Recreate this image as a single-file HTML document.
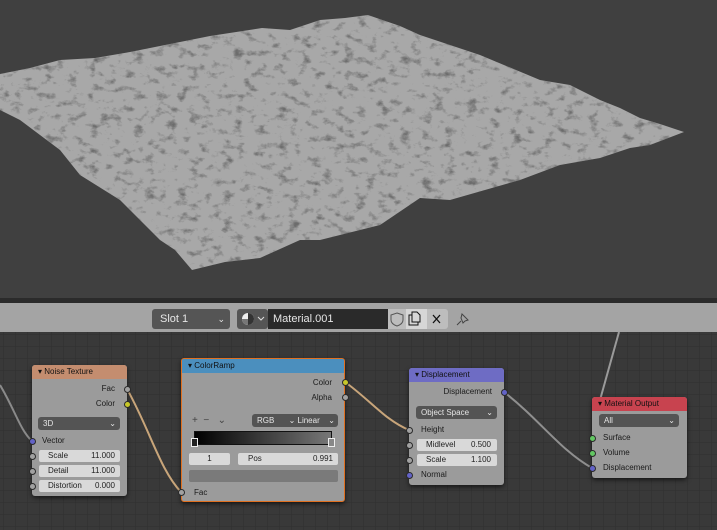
<!DOCTYPE html>
<html><head><meta charset="utf-8"><style>
*{margin:0;padding:0;box-sizing:border-box}
body{width:717px;height:530px;overflow:hidden;background:#404040;font-family:"Liberation Sans",sans-serif;font-size:8px;color:#1a1a1a;position:relative}
.abs{position:absolute}
.node{position:absolute;background:#9b9b9b;border-radius:3px;box-shadow:0 2px 5px rgba(0,0,0,.6)}
.hd{height:14px;border-radius:3px 3px 0 0;padding-left:6px;line-height:14px;font-size:8px;color:#111}
.row{position:absolute;font-size:8px;line-height:10px}
.fld{position:absolute;background:#d9d9d9;border-radius:2px;height:12px;font-size:8px;line-height:12px;color:#222}
.dd{position:absolute;background:#545454;border-radius:3px;height:13px;color:#e6e6e6;font-size:8px;line-height:13px;padding-left:5px}
.sk{position:absolute;width:7px;height:7px;border-radius:50%;border:1px solid #2a2a2a;margin:-3.5px 0 0 -3.5px}
</style></head><body>
<svg class="abs" style="left:0;top:0" width="717" height="300">
<rect width="717" height="300" fill="#404040"/>
<defs>
<filter id="n" x="0" y="0" width="100%" height="100%" color-interpolation-filters="sRGB"><feTurbulence type="fractalNoise" baseFrequency="0.09 0.14" numOctaves="5" seed="3" result="t"/><feColorMatrix in="t" type="matrix" values="0 0 0 0 0.35 0 0 0 0 0.35 0 0 0 0 0.35 3.2 0 0 0 -1.75"/></filter>
<clipPath id="c"><path d="M0,74 L30,68 L60,60 L95,58 L130,52 L170,44 L210,36 L262,28 L290,30 L320,20 L345,18 L368,15 L400,26 L420,35 L480,55 L540,80 L570,85 L600,100 L620,108 L640,118 L660,124 L684,132 L650,145 L630,148 L600,158 L560,165 L520,180 L450,200 L420,198 L380,225 L320,240 L300,240 L260,258 L225,262 L192,270 L175,250 L160,240 L120,200 L80,175 L60,150 L20,120 L10,115 L0,110 Z"/></clipPath>
</defs>
<g clip-path="url(#c)"><rect width="717" height="300" fill="#a8a8a8"/><rect width="717" height="300" fill="#000" filter="url(#n)" opacity="0.75"/></g>
</svg>
<div class="abs" style="left:0;top:298px;width:717px;height:5px;background:#2b2b2b"></div>
<div class="abs" style="left:0;top:303px;width:717px;height:29px;background:#a4a4a4"></div>
<svg class="abs" style="left:0;top:332px" width="717" height="198">
<defs><pattern id="g" width="12" height="12" patternUnits="userSpaceOnUse" x="3" y="2"><path d="M0 0H12M0 0V12" stroke="#2f2f2f" stroke-width="1"/></pattern></defs>
<rect width="717" height="198" fill="#393939"/><rect width="717" height="198" fill="url(#g)"/>
</svg>
<div class="dd" style="left:152px;top:309px;width:78px;height:20px;line-height:20px;font-size:11px;background:#555;padding-left:8px">Slot 1<span style="position:absolute;right:5px;font-size:9px">⌄</span></div>
<div class="dd" style="left:237px;top:309px;width:31px;height:20px;background:#555"></div>
<svg class="abs" style="left:240px;top:311px" width="28" height="16"><circle cx="8" cy="8" r="6" fill="#eee"/><path d="M8 2a6 6 0 0 1 0 12z M8 8h6a6 6 0 0 1-6 6z" fill="#333"/><path d="M8 8H2a6 6 0 0 0 6 6z" fill="#777"/><path d="M18 6l3 3 3-3" stroke="#ddd" fill="none"/></svg>
<div class="abs" style="left:268px;top:309px;width:120px;height:20px;background:#2a2a2a;color:#e6e6e6;font-size:11px;line-height:20px;padding-left:5px">Material.001</div>
<div class="abs" style="left:388px;top:309px;width:60px;height:20px;background:#bdbdbd;border-radius:0 3px 3px 0"></div>
<div class="abs" style="left:406px;top:309px;width:21px;height:20px;background:#d6d6d6"></div>
<svg class="abs" style="left:388px;top:309px" width="90" height="20"><path d="M9 4l6 2v5c0 3-3 5-6 6-3-1-6-3-6-6V6z" fill="none" stroke="#555"/><path d="M24 6h-3v10h9v-3 M24 3h5l3 3v7h-8z" fill="none" stroke="#111"/><path d="M45 6l7 8M52 6l-7 8" stroke="#111" stroke-width="1.3"/><path d="M74 5l6 6-3 1-2 2-2-5zM73 12l-4 4" stroke="#444" fill="none"/></svg>
<svg class="abs" style="left:0;top:0" width="717" height="530">
<g fill="none" stroke-width="2">
<path d="M0,385 C15,410 20,430 32,441" stroke="#8a8a8a"/>
<path d="M127,389 C150,430 160,470 181,492" stroke="#c8a57a"/>
<path d="M345,382 C370,400 385,420 409,430" stroke="#c8a57a"/>
<path d="M504,392 C540,420 560,450 592,468" stroke="#8f8f8f"/>
<path d="M619,332 L600,400" stroke="#9a9a9a"/>
</g></svg>
<div class="node" style="left:32px;top:365px;width:95px;height:131px">
<div class="hd" style="background:#c48d6f">▾ Noise Texture</div>
<div class="row" style="right:12px;top:19px">Fac</div>
<div class="row" style="right:12px;top:34px">Color</div>
<div class="dd" style="left:6px;top:52px;width:82px">3D<span style="position:absolute;right:4px">⌄</span></div>
<div class="row" style="left:10px;top:71px">Vector</div>
<div class="fld" style="left:7px;top:85px;width:81px"><span style="margin-left:9px">Scale</span><span style="position:absolute;right:5px">11.000</span></div>
<div class="fld" style="left:7px;top:100px;width:81px"><span style="margin-left:9px">Detail</span><span style="position:absolute;right:5px">11.000</span></div>
<div class="fld" style="left:7px;top:115px;width:81px"><span style="margin-left:9px">Distortion</span><span style="position:absolute;right:5px">0.000</span></div>
</div>
<div class="node" style="left:181px;top:358px;width:164px;height:144px;border:1px solid #e07020">
<div class="hd" style="background:#4b8fbe;border-radius:2px 2px 0 0">▾ ColorRamp</div>
<div class="row" style="right:12px;top:19px">Color</div>
<div class="row" style="right:12px;top:34px">Alpha</div>
<div class="row" style="left:10px;top:57px;color:#444;font-size:10px">+ &nbsp;− &nbsp; ⌄</div>
<div class="dd" style="left:70px;top:55px;width:86px">RGB <span style="margin-left:12px">⌄ Linear</span><span style="position:absolute;right:3px">⌄</span></div>
<div class="abs" style="left:12px;top:72px;width:138px;height:14px;background:linear-gradient(90deg,#000,#777);border:1px solid #111"></div>
<div class="abs" style="left:9px;top:79px;width:7px;height:9px;background:#222;border:1px solid #eee"></div>
<div class="abs" style="left:146px;top:79px;width:7px;height:9px;background:#888;border:1px solid #eee"></div>
<div class="fld" style="left:7px;top:94px;width:41px;text-align:center">1</div>
<div class="fld" style="left:56px;top:94px;width:100px"><span style="margin-left:10px">Pos</span><span style="position:absolute;right:5px">0.991</span></div>
<div class="abs" style="left:7px;top:111px;width:149px;height:12px;background:#7a7a7a;border-radius:2px"></div>
<div class="row" style="left:12px;top:129px">Fac</div>
</div>
<div class="node" style="left:409px;top:368px;width:95px;height:117px">
<div class="hd" style="background:#6e6cc4">▾ Displacement</div>
<div class="row" style="right:12px;top:19px">Displacement</div>
<div class="dd" style="left:7px;top:38px;width:81px">Object Space<span style="position:absolute;right:4px">⌄</span></div>
<div class="row" style="left:12px;top:57px">Height</div>
<div class="fld" style="left:8px;top:71px;width:80px"><span style="margin-left:9px">Midlevel</span><span style="position:absolute;right:6px">0.500</span></div>
<div class="fld" style="left:8px;top:86px;width:80px"><span style="margin-left:9px">Scale</span><span style="position:absolute;right:6px">1.100</span></div>
<div class="row" style="left:12px;top:102px">Normal</div>
</div>
<div class="node" style="left:592px;top:397px;width:95px;height:81px">
<div class="hd" style="background:#c8434f">▾ Material Output</div>
<div class="dd" style="left:7px;top:17px;width:80px">All<span style="position:absolute;right:4px">⌄</span></div>
<div class="row" style="left:11px;top:36px">Surface</div>
<div class="row" style="left:11px;top:51px">Volume</div>
<div class="row" style="left:11px;top:66px">Displacement</div>
</div>
<div class="sk" style="left:127px;top:389px;background:#a1a1a1"></div>
<div class="sk" style="left:127px;top:404px;background:#c7c729"></div>
<div class="sk" style="left:32px;top:441px;background:#6363c7"></div>
<div class="sk" style="left:32px;top:456px;background:#a1a1a1"></div>
<div class="sk" style="left:32px;top:471px;background:#a1a1a1"></div>
<div class="sk" style="left:32px;top:486px;background:#a1a1a1"></div>
<div class="sk" style="left:345px;top:382px;background:#c7c729"></div>
<div class="sk" style="left:345px;top:397px;background:#a1a1a1"></div>
<div class="sk" style="left:181px;top:492px;background:#a1a1a1"></div>
<div class="sk" style="left:504px;top:392px;background:#6363c7"></div>
<div class="sk" style="left:409px;top:430px;background:#a1a1a1"></div>
<div class="sk" style="left:409px;top:445px;background:#a1a1a1"></div>
<div class="sk" style="left:409px;top:460px;background:#a1a1a1"></div>
<div class="sk" style="left:409px;top:475px;background:#6363c7"></div>
<div class="sk" style="left:592px;top:438px;background:#63c763"></div>
<div class="sk" style="left:592px;top:453px;background:#63c763"></div>
<div class="sk" style="left:592px;top:468px;background:#6363c7"></div>
</body></html>
